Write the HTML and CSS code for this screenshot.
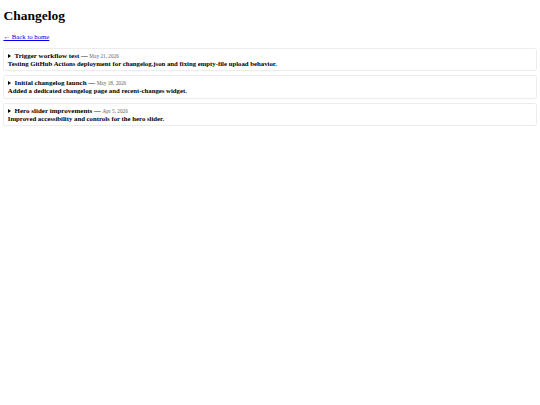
FILE: index.html
```html
<!DOCTYPE html>
<html lang="en">
<head>
<meta charset="utf-8">
<title>Changelog</title>
<link rel="stylesheet" href="styles.css">
</head>
<body class="page">
  <h1 class="title">Changelog</h1>
  <p class="back"><a class="back-link" href="#">← Back to home</a></p>
  <div class="list">
    <details class="entry">
      <summary class="summary"><span class="head"><span class="marker"></span><strong class="name">Trigger workflow test</strong> <strong>—</strong> <small class="date">May 21, 2026</small></span><strong class="desc">Testing GitHub Actions deployment for changelog.json and fixing empty-file upload behavior.</strong></summary>
    </details>
    <details class="entry">
      <summary class="summary"><span class="head"><span class="marker"></span><strong class="name">Initial changelog launch</strong> <strong>—</strong> <small class="date">May 18, 2026</small></span><strong class="desc">Added a dedicated changelog page and recent-changes widget.</strong></summary>
    </details>
    <details class="entry">
      <summary class="summary"><span class="head"><span class="marker"></span><strong class="name">Hero slider improvements</strong> <strong>—</strong> <small class="date">Apr 5, 2026</small></span><strong class="desc">Improved accessibility and controls for the hero slider.</strong></summary>
    </details>
  </div>
</body>
</html>
```
FILE: styles.css
```css
html {
  background: #fff;
}
.page {
  margin: 0;
  padding: 0 3.4px;
  font-family: "Liberation Serif", "Times New Roman", serif;
  font-size: 6.75px;
  line-height: 7px;
  color: #000;
}
.title {
  font-size: 13.5px;
  line-height: 15px;
  font-weight: bold;
  margin: 8px 0 0;
}
.back {
  margin: 10px 0 0;
  line-height: 8px;
}
.back-link {
  color: #0000ee;
}
.list {
  display: flex;
  flex-direction: column;
  gap: 4.3px;
  margin-top: 6.5px;
}
.entry {
  border: 1px solid #ececec;
  border-radius: 2.5px;
  padding: 3.2px 3.4px;
}
.summary {
  display: block;
  list-style: none;
  cursor: pointer;
}
.summary::-webkit-details-marker {
  display: none;
}
.head {
  display: block;
}
.marker {
  display: inline-block;
  width: 0;
  height: 0;
  border-left: 3.6px solid #000;
  border-top: 2px solid transparent;
  border-bottom: 2px solid transparent;
  margin: 0 3.4px 0 0.4px;
  vertical-align: 0;
}
.name {
  font-size: 7px;
}
.date {
  color: #666;
  font-size: 5.3px;
}
.desc {
  display: block;
}
```
